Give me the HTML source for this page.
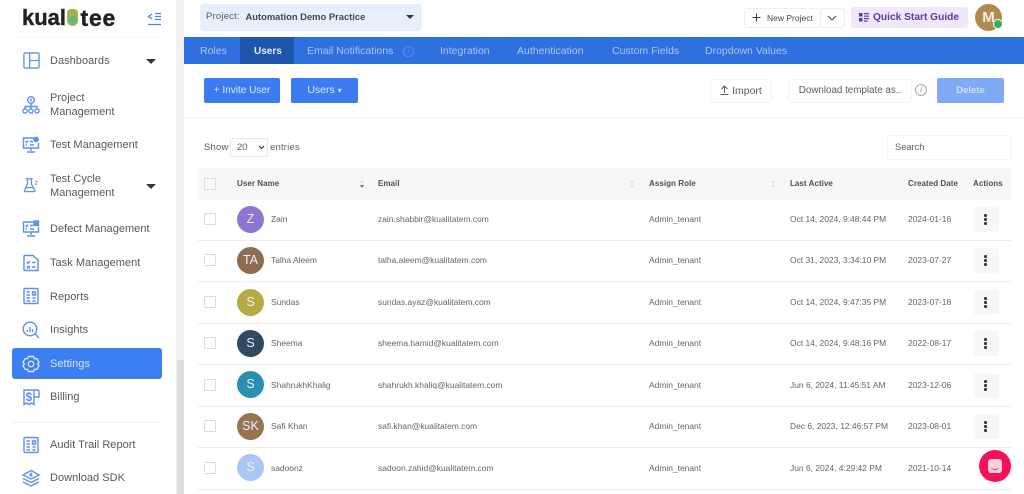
<!DOCTYPE html>
<html><head><meta charset="utf-8">
<style>
html,body{margin:0;padding:0;width:1024px;height:494px;overflow:hidden;background:#fff;font-family:"Liberation Sans",sans-serif;}
.a{position:absolute;white-space:nowrap;}
.s{position:absolute;left:50px;font-size:11px;letter-spacing:.03px;color:#55585e;line-height:13.5px;}
svg.i{position:absolute;left:22px;width:18px;height:18px;fill:none;stroke:#5f8ff0;stroke-width:1.4;}
.t{position:absolute;top:37px;height:27px;line-height:29px;font-size:10.5px;color:#a9c6f5;}
.h{position:absolute;top:168px;height:32px;line-height:32px;font-size:8px;letter-spacing:.05px;font-weight:bold;color:#4d5056;}
.ln{position:absolute;left:198px;width:813px;height:1px;background:#ececec;}
.cb{position:absolute;left:204px;width:10px;height:10px;border:1px solid #dcdcdc;border-radius:1px;background:#fff;}
.av{position:absolute;left:237px;width:27px;height:27px;border-radius:50%;color:#eef;text-align:center;line-height:27px;font-size:12.5px;}
.c{position:absolute;font-size:8.45px;line-height:12px;color:#62656a;white-space:nowrap;}
.m{position:absolute;left:974px;width:25px;height:25px;background:#f7f7f7;border-radius:2px;}
.m i{position:absolute;left:10px;width:2.5px;height:2.5px;background:#33363a;border-radius:50%;}
.b{position:absolute;background:#3b7cf0;border-radius:2px;color:#dbe7fd;font-size:10px;text-align:center;}
.w{position:absolute;border:1px solid #f3f3f3;border-radius:3px;background:#fff;color:#5a5d62;font-size:10.5px;text-align:center;}
</style></head><body>

<!-- sidebar -->
<div class="a" style="left:0;top:0;width:176px;height:494px;background:#fff"></div>
<div class="a" style="left:176px;top:0;width:8px;height:494px;background:#f0f0f0"></div>
<div class="a" style="left:177px;top:360px;width:7px;height:134px;background:#dedede"></div>

<div class="a" style="left:22px;top:6px;font-size:22px;font-weight:bold;color:#222;line-height:24px;-webkit-text-stroke:.4px #222">kual</div>
<div class="a" style="left:67px;top:9px;width:11px;height:17px;background:#a5b04a;border-radius:4px 4px 6px 6px"></div>
<div class="a" style="left:68.500px;top:16px;width:8px;height:8px;background:#5cb98c;border-radius:50%"></div>
<div class="a" style="left:80.500px;top:6px;font-size:23px;font-weight:bold;color:#222;line-height:24px;letter-spacing:.8px;-webkit-text-stroke:.4px #222">tee</div>
<svg class="a" style="left:147px;top:12px" width="15" height="14" fill="none" stroke="#4f86ec" stroke-width="1.3"><path d="M5 2 L1.5 4.5 L5 7M8 1.5H14M8 4.5H14M8 7.5H14M1 12.5H14"/></svg>
<div class="a" style="left:12px;top:37px;width:152px;height:1px;background:#f7f7f7"></div>

<svg class="i" style="top:52px;left:23px;width:17px;height:17px" viewBox="0 0 18 18"><rect x="1" y="1" width="16" height="16" rx="1.5"/><path d="M7 1V17M7 9H17"/></svg>
<div class="s" style="top:55px">Dashboards</div>
<div class="a" style="left:146px;top:59px;border:5px solid transparent;border-top:5px solid #33363a;border-bottom:0"></div>

<svg class="i" style="top:96px" viewBox="0 0 18 18"><circle cx="9" cy="4" r="3.3"/><path d="M9 2.500V4.500L10.200 5.200M9 7.300V10M3 13V10.500H15V13M9 10.500V13"/><circle cx="3" cy="15" r="2.100"/><circle cx="9" cy="15" r="2.100"/><circle cx="15" cy="15" r="2.100"/></svg>
<div class="s" style="top:92px">Project<br>Management</div>

<svg class="i" style="top:136px" viewBox="0 0 18 18"><path d="M12 2H1.500V12H16.500V7M9 12V15M5 16H13M3.500 5.500L4.500 6.500L6 4.500M8 5.500H11M3.500 9H5M8 9H12"/><circle cx="14" cy="3.500" r="2.200" fill="#5f8ff0"/></svg>
<div class="s" style="top:139px">Test Management</div>

<svg class="i" style="top:177px;left:23px;width:16px;height:16px" viewBox="0 0 18 18"><path d="M3 2H11M5 2V8L1.500 15.500Q1.500 16.500 3 16.500H12Q13.500 16.500 13.500 15.500L9.500 8V2M3.500 12H11.500M14 5H16.500M13.500 8H16M12.500 3H13"/></svg>
<div class="s" style="top:173px">Test Cycle<br>Management</div>
<div class="a" style="left:146px;top:184px;border:5px solid transparent;border-top:5px solid #33363a;border-bottom:0"></div>

<svg class="i" style="top:220px" viewBox="0 0 18 18"><path d="M12 2H1.500V12H16.500V7M9 12V15M5 16H13M3.500 5.500L4.500 6.500L6 4.500M8 5.500H11M3.500 9H5M8 9H12"/><rect x="12" y="1" width="4.500" height="4.500" fill="#5f8ff0"/></svg>
<div class="s" style="top:223px">Defect Management</div>

<svg class="i" style="top:254px" viewBox="0 0 18 18"><path d="M3 1.500H11L16 6V16.500H3Q2 16.500 2 15.500V2.500Q2 1.500 3 1.500ZM5 8L6 9.500L8 7M10 8.500H13.500M5 12L8 14.500M8 12L5 14.500M10 13H13.500"/></svg>
<div class="s" style="top:257px">Task Management</div>

<svg class="i" style="top:287px" viewBox="0 0 18 18"><rect x="2" y="1.500" width="14" height="15" rx="1"/><path d="M4.500 5H8M4.500 8H8M4.500 11H8M4.500 14H8M10.500 5H13.500V8H10.500ZM10.500 11H13.500M10.500 14H13.500"/></svg>
<div class="s" style="top:291px">Reports</div>

<svg class="i" style="top:321px" viewBox="0 0 18 18"><circle cx="8" cy="8" r="6.800"/><path d="M13 13L17 17M5.500 11V9M8 11V6M10.500 11V8"/></svg>
<div class="s" style="top:324px">Insights</div>

<div class="a" style="left:12px;top:348px;width:150px;height:31px;background:#3b7ff2;border-radius:3px"></div>
<svg class="i" style="top:355px;stroke:#d8e5fc" viewBox="0 0 18 18"><path d="M6.500 1.500H11.500L12.500 3.800L15 3.600L17 7.500L15.500 9L17 10.500L15 14.400L12.500 14.200L11.500 16.500H6.500L5.500 14.200L3 14.400L1 10.500L2.500 9L1 7.500L3 3.600L5.500 3.800Z"/><circle cx="9" cy="9" r="2.800"/></svg>
<div class="s" style="top:358px;color:#dbe7fd">Settings</div>

<svg class="i" style="top:388px" viewBox="0 0 18 18"><path d="M12 2H2V16.500L4.500 15L7 16.500L9.500 15L12 16.500V2H15.500Q17 2 17 3.500V9H12"/></svg>
<div class="a" style="left:25.500px;top:390px;font-size:12px;line-height:14px;font-weight:bold;color:#5f8ff0">$</div>
<div class="s" style="top:391px">Billing</div>

<div class="a" style="left:12px;top:422px;width:150px;height:1px;background:#f1f1f1"></div>

<svg class="i" style="top:436px" viewBox="0 0 18 18"><rect x="2" y="1.500" width="14" height="15" rx="1"/><path d="M4.500 5H8M4.500 8H8M4.500 11H8M4.500 14H8M10.500 5H13.500V8H10.500ZM10.500 11H13.500M10.500 14H13.500"/></svg>
<div class="s" style="top:439px">Audit Trail Report</div>

<svg class="i" style="top:469px" viewBox="0 0 18 18"><path d="M9 1.500L17 6L9 10L1 6ZM1 9.500L9 13.500L17 9.500M1 13L9 17L17 13M9 3.500V7M7.500 5.500L9 7L10.500 5.500"/></svg>
<div class="s" style="top:472px">Download SDK</div>

<!-- top bar -->
<div class="a" style="left:200px;top:4px;width:222px;height:27px;background:#e8effc;border-radius:4px"></div>
<div class="a" style="left:206px;top:4px;line-height:26px;font-size:9.500px;letter-spacing:.2px;color:#5a5d62">Project:</div>
<div class="a" style="left:245.500px;top:4px;line-height:26px;font-size:9.400px;font-weight:bold;color:#44474c">Automation Demo Practice</div>
<div class="a" style="left:406px;top:15px;border:4px solid transparent;border-top:4px solid #33363a;border-bottom:0"></div>

<div class="w" style="left:744px;top:8px;width:75px;height:18px;line-height:18px;border-color:#eee;font-size:8.500px"></div>
<svg class="a" style="left:752px;top:13px" width="9" height="9" stroke="#33363a" stroke-width="1"><path d="M4.500 .5V8.500M.5 4.500H8.500"/></svg>
<div class="a" style="left:767px;top:9px;line-height:18px;font-size:8.500px;color:#44474c">New Project</div>
<div class="w" style="left:820px;top:8px;width:23px;height:18px;border-color:#eee"></div>
<svg class="a" style="left:827px;top:15px" width="10" height="6" fill="none" stroke="#44474c" stroke-width="1"><path d="M1 1L5 5L9 1"/></svg>
<div class="a" style="left:851px;top:7px;width:117px;height:21px;background:#efe8fb;border-radius:3px"></div>
<svg class="a" style="left:859px;top:13px" width="10" height="9" fill="#5e3a9e"><rect x="0" y="0" width="3.500" height="3.500"/><rect x="0" y="5" width="3.500" height="3.500"/><rect x="5" y="0" width="5" height="1.200"/><rect x="5" y="2.500" width="5" height="1.200"/><rect x="5" y="5" width="5" height="1.200"/><rect x="5" y="7.500" width="3.500" height="1.200"/></svg>
<div class="a" style="left:873px;top:7px;line-height:21px;font-size:10.200px;font-weight:bold;color:#5e3a9e">Quick Start Guide</div>
<div class="a" style="left:975px;top:4px;width:27px;height:27px;border-radius:50%;background:#b28a4f;color:#f5efe4;font-size:15px;line-height:27px;text-align:center;font-weight:bold">M</div>
<div class="a" style="left:993px;top:19px;width:8px;height:8px;border-radius:50%;background:#2fb35a;border:1px solid #fff"></div>

<!-- tabs -->
<div class="a" style="left:184px;top:37px;width:840px;height:27px;background:#2f70df"></div>
<div class="a" style="left:240px;top:37px;width:54px;height:27px;background:#1f56ad"></div>
<div class="t" style="left:200px">Roles</div>
<div class="t" style="left:254px;color:#e3edfd;font-weight:bold;font-size:10px">Users</div>
<div class="t" style="left:307px">Email Notifications</div>
<div class="a" style="left:403px;top:46px;width:9px;height:9px;border:1px solid #5a8fe6;border-radius:50%;color:#5a8fe6;font-size:7px;line-height:9px;text-align:center">i</div>
<div class="t" style="left:440px">Integration</div>
<div class="t" style="left:517px">Authentication</div>
<div class="t" style="left:612px">Custom Fields</div>
<div class="t" style="left:705px">Dropdown Values</div>

<!-- toolbar -->
<div class="b" style="left:204px;top:78px;width:76px;height:25px;line-height:25px">+ Invite User</div>
<div class="b" style="left:291px;top:78px;width:67px;height:25px;line-height:25px;font-size:10.500px">Users <span style="font-size:8px;vertical-align:0">&#9662;</span></div>
<div class="w" style="left:710px;top:79px;width:60px;height:22px;line-height:22px">
<svg style="vertical-align:-1px" width="9" height="10" fill="none" stroke="#55585e" stroke-width="1"><path d="M4.500 8V1.500M1.500 4L4.500 1L7.500 4M.5 9.500H8.500"/></svg> Import</div>
<div class="w" style="left:788px;top:79px;width:122px;height:22px;line-height:22px;font-size:9.800px">Download template as..</div>
<div class="a" style="left:915px;top:84px;width:10px;height:10px;border:1px solid #aaa;border-radius:50%;color:#888;font-size:8px;line-height:10px;text-align:center;font-style:italic">i</div>
<div class="b" style="left:937px;top:78px;width:67px;height:25px;line-height:25px;background:#7eaaf6;font-size:9.500px;font-weight:bold;color:#cfe0fb">Delete</div>
<div class="a" style="left:184px;top:117px;width:840px;height:1px;background:#f5f5f5"></div>

<!-- controls -->
<div class="a" style="left:204px;top:140px;font-size:9.500px;line-height:15px;letter-spacing:.2px;color:#5a5d62">Show</div>
<div class="a" style="left:230px;top:138px;width:36px;height:17px;border:1px solid #e6e6e6;border-radius:2px;font-size:9.500px;line-height:17px;color:#5a5d62;text-indent:6px">20</div>
<svg class="a" style="left:258px;top:145px" width="7" height="5" fill="none" stroke="#33363a" stroke-width="1.200"><path d="M1 1L3.500 3.500L6 1"/></svg>
<div class="a" style="left:270px;top:140px;font-size:9.500px;line-height:15px;letter-spacing:.2px;color:#5a5d62">entries</div>
<div class="w" style="left:887px;top:135px;width:122px;height:23px;line-height:23px;text-align:left;text-indent:7px;font-size:9.300px">Search</div>

<!-- table -->
<div class="a" style="left:198px;top:168px;width:813px;height:32px;background:#f7f7f7"></div>
<div class="cb" style="top:178px;background:#fafafa"></div>
<div class="h" style="left:237px">User Name</div>
<div class="a" style="left:360px;top:180px;border:2px solid transparent;border-bottom:3px solid #ddd;border-top:0"></div>
<div class="a" style="left:360px;top:185px;border:2px solid transparent;border-top:3px solid #777;border-bottom:0"></div>
<div class="h" style="left:378px">Email</div>
<div class="a" style="left:630px;top:180px;border:2px solid transparent;border-bottom:3px solid #ddd;border-top:0"></div>
<div class="a" style="left:630px;top:185px;border:2px solid transparent;border-top:3px solid #ddd;border-bottom:0"></div>
<div class="h" style="left:649px">Assign Role</div>
<div class="a" style="left:771px;top:180px;border:2px solid transparent;border-bottom:3px solid #ddd;border-top:0"></div>
<div class="a" style="left:771px;top:185px;border:2px solid transparent;border-top:3px solid #ddd;border-bottom:0"></div>
<div class="h" style="left:790px">Last Active</div>
<div class="h" style="left:908px">Created Date</div>
<div class="h" style="left:973px">Actions</div>

<div class="ln" style="top:240px"></div><div class="ln" style="top:281px"></div><div class="ln" style="top:323px"></div><div class="ln" style="top:364px"></div><div class="ln" style="top:406px"></div><div class="ln" style="top:447px"></div><div class="ln" style="top:489px"></div>

<!-- row 1 -->
<div class="cb" style="top:213px"></div><div class="av" style="top:206px;background:#8f74d0">Z</div>
<div class="c" style="left:271px;top:213px">Zain</div><div class="c" style="left:378px;top:213px">zain.shabbir@kualitatem.com</div><div class="c" style="left:649px;top:213px">Admin_tenant</div><div class="c" style="left:790px;top:213px">Oct 14, 2024, 9:48:44 PM</div><div class="c" style="left:908px;top:213px">2024-01-16</div>
<div class="m" style="top:207px"><i style="top:7px"></i><i style="top:11px"></i><i style="top:15px"></i></div>
<!-- row 2 -->
<div class="cb" style="top:254px"></div><div class="av" style="top:247px;background:#8f6c4d">TA</div>
<div class="c" style="left:271px;top:254px">Talha Aleem</div><div class="c" style="left:378px;top:254px">talha.aleem@kualitatem.com</div><div class="c" style="left:649px;top:254px">Admin_tenant</div><div class="c" style="left:790px;top:254px">Oct 31, 2023, 3:34:10 PM</div><div class="c" style="left:908px;top:254px">2023-07-27</div>
<div class="m" style="top:248px"><i style="top:7px"></i><i style="top:11px"></i><i style="top:15px"></i></div>
<!-- row 3 -->
<div class="cb" style="top:296px"></div><div class="av" style="top:289px;background:#b5ab44">S</div>
<div class="c" style="left:271px;top:296px">Sundas</div><div class="c" style="left:378px;top:296px">sundas.ayaz@kualitatem.com</div><div class="c" style="left:649px;top:296px">Admin_tenant</div><div class="c" style="left:790px;top:296px">Oct 14, 2024, 9:47:35 PM</div><div class="c" style="left:908px;top:296px">2023-07-18</div>
<div class="m" style="top:290px"><i style="top:7px"></i><i style="top:11px"></i><i style="top:15px"></i></div>
<!-- row 4 -->
<div class="cb" style="top:337px"></div><div class="av" style="top:330px;background:#2f4a62">S</div>
<div class="c" style="left:271px;top:337px">Sheema</div><div class="c" style="left:378px;top:337px">sheema.hamid@kualitatem.com</div><div class="c" style="left:649px;top:337px">Admin_tenant</div><div class="c" style="left:790px;top:337px">Oct 14, 2024, 9:48:16 PM</div><div class="c" style="left:908px;top:337px">2022-08-17</div>
<div class="m" style="top:331px"><i style="top:7px"></i><i style="top:11px"></i><i style="top:15px"></i></div>
<!-- row 5 -->
<div class="cb" style="top:379px"></div><div class="av" style="top:371px;background:#2c8fb0">S</div>
<div class="c" style="left:271px;top:379px">ShahrukhKhalig</div><div class="c" style="left:378px;top:379px">shahrukh.khaliq@kualitatem.com</div><div class="c" style="left:649px;top:379px">Admin_tenant</div><div class="c" style="left:790px;top:379px">Jun 6, 2024, 11:45:51 AM</div><div class="c" style="left:908px;top:379px">2023-12-06</div>
<div class="m" style="top:373px"><i style="top:7px"></i><i style="top:11px"></i><i style="top:15px"></i></div>
<!-- row 6 -->
<div class="cb" style="top:420px"></div><div class="av" style="top:413px;background:#96744f">SK</div>
<div class="c" style="left:271px;top:420px">Safi Khan</div><div class="c" style="left:378px;top:420px">safi.khan@kualitatem.com</div><div class="c" style="left:649px;top:420px">Admin_tenant</div><div class="c" style="left:790px;top:420px">Dec 6, 2023, 12:46:57 PM</div><div class="c" style="left:908px;top:420px">2023-08-01</div>
<div class="m" style="top:414px"><i style="top:7px"></i><i style="top:11px"></i><i style="top:15px"></i></div>
<!-- row 7 -->
<div class="cb" style="top:462px"></div><div class="av" style="top:454px;background:#a9c7f5">S</div>
<div class="c" style="left:271px;top:462px">sadoonz</div><div class="c" style="left:378px;top:462px">sadoon.zahid@kualitatem.com</div><div class="c" style="left:649px;top:462px">Admin_tenant</div><div class="c" style="left:790px;top:462px">Jun 6, 2024, 4:29:42 PM</div><div class="c" style="left:908px;top:462px">2021-10-14</div>

<!-- chat bubble -->
<div class="a" style="left:979px;top:450px;width:32px;height:32px;border-radius:50%;background:#f5115a"></div>
<svg class="a" style="left:988px;top:459px" width="14" height="14"><rect x="0" y="0" width="14" height="14" rx="3" fill="#fbd0dd"/><path d="M3.500 9.500Q7 11.500 10.500 9.500" fill="none" stroke="#f5115a" stroke-width="1"/></svg>
</body></html>
